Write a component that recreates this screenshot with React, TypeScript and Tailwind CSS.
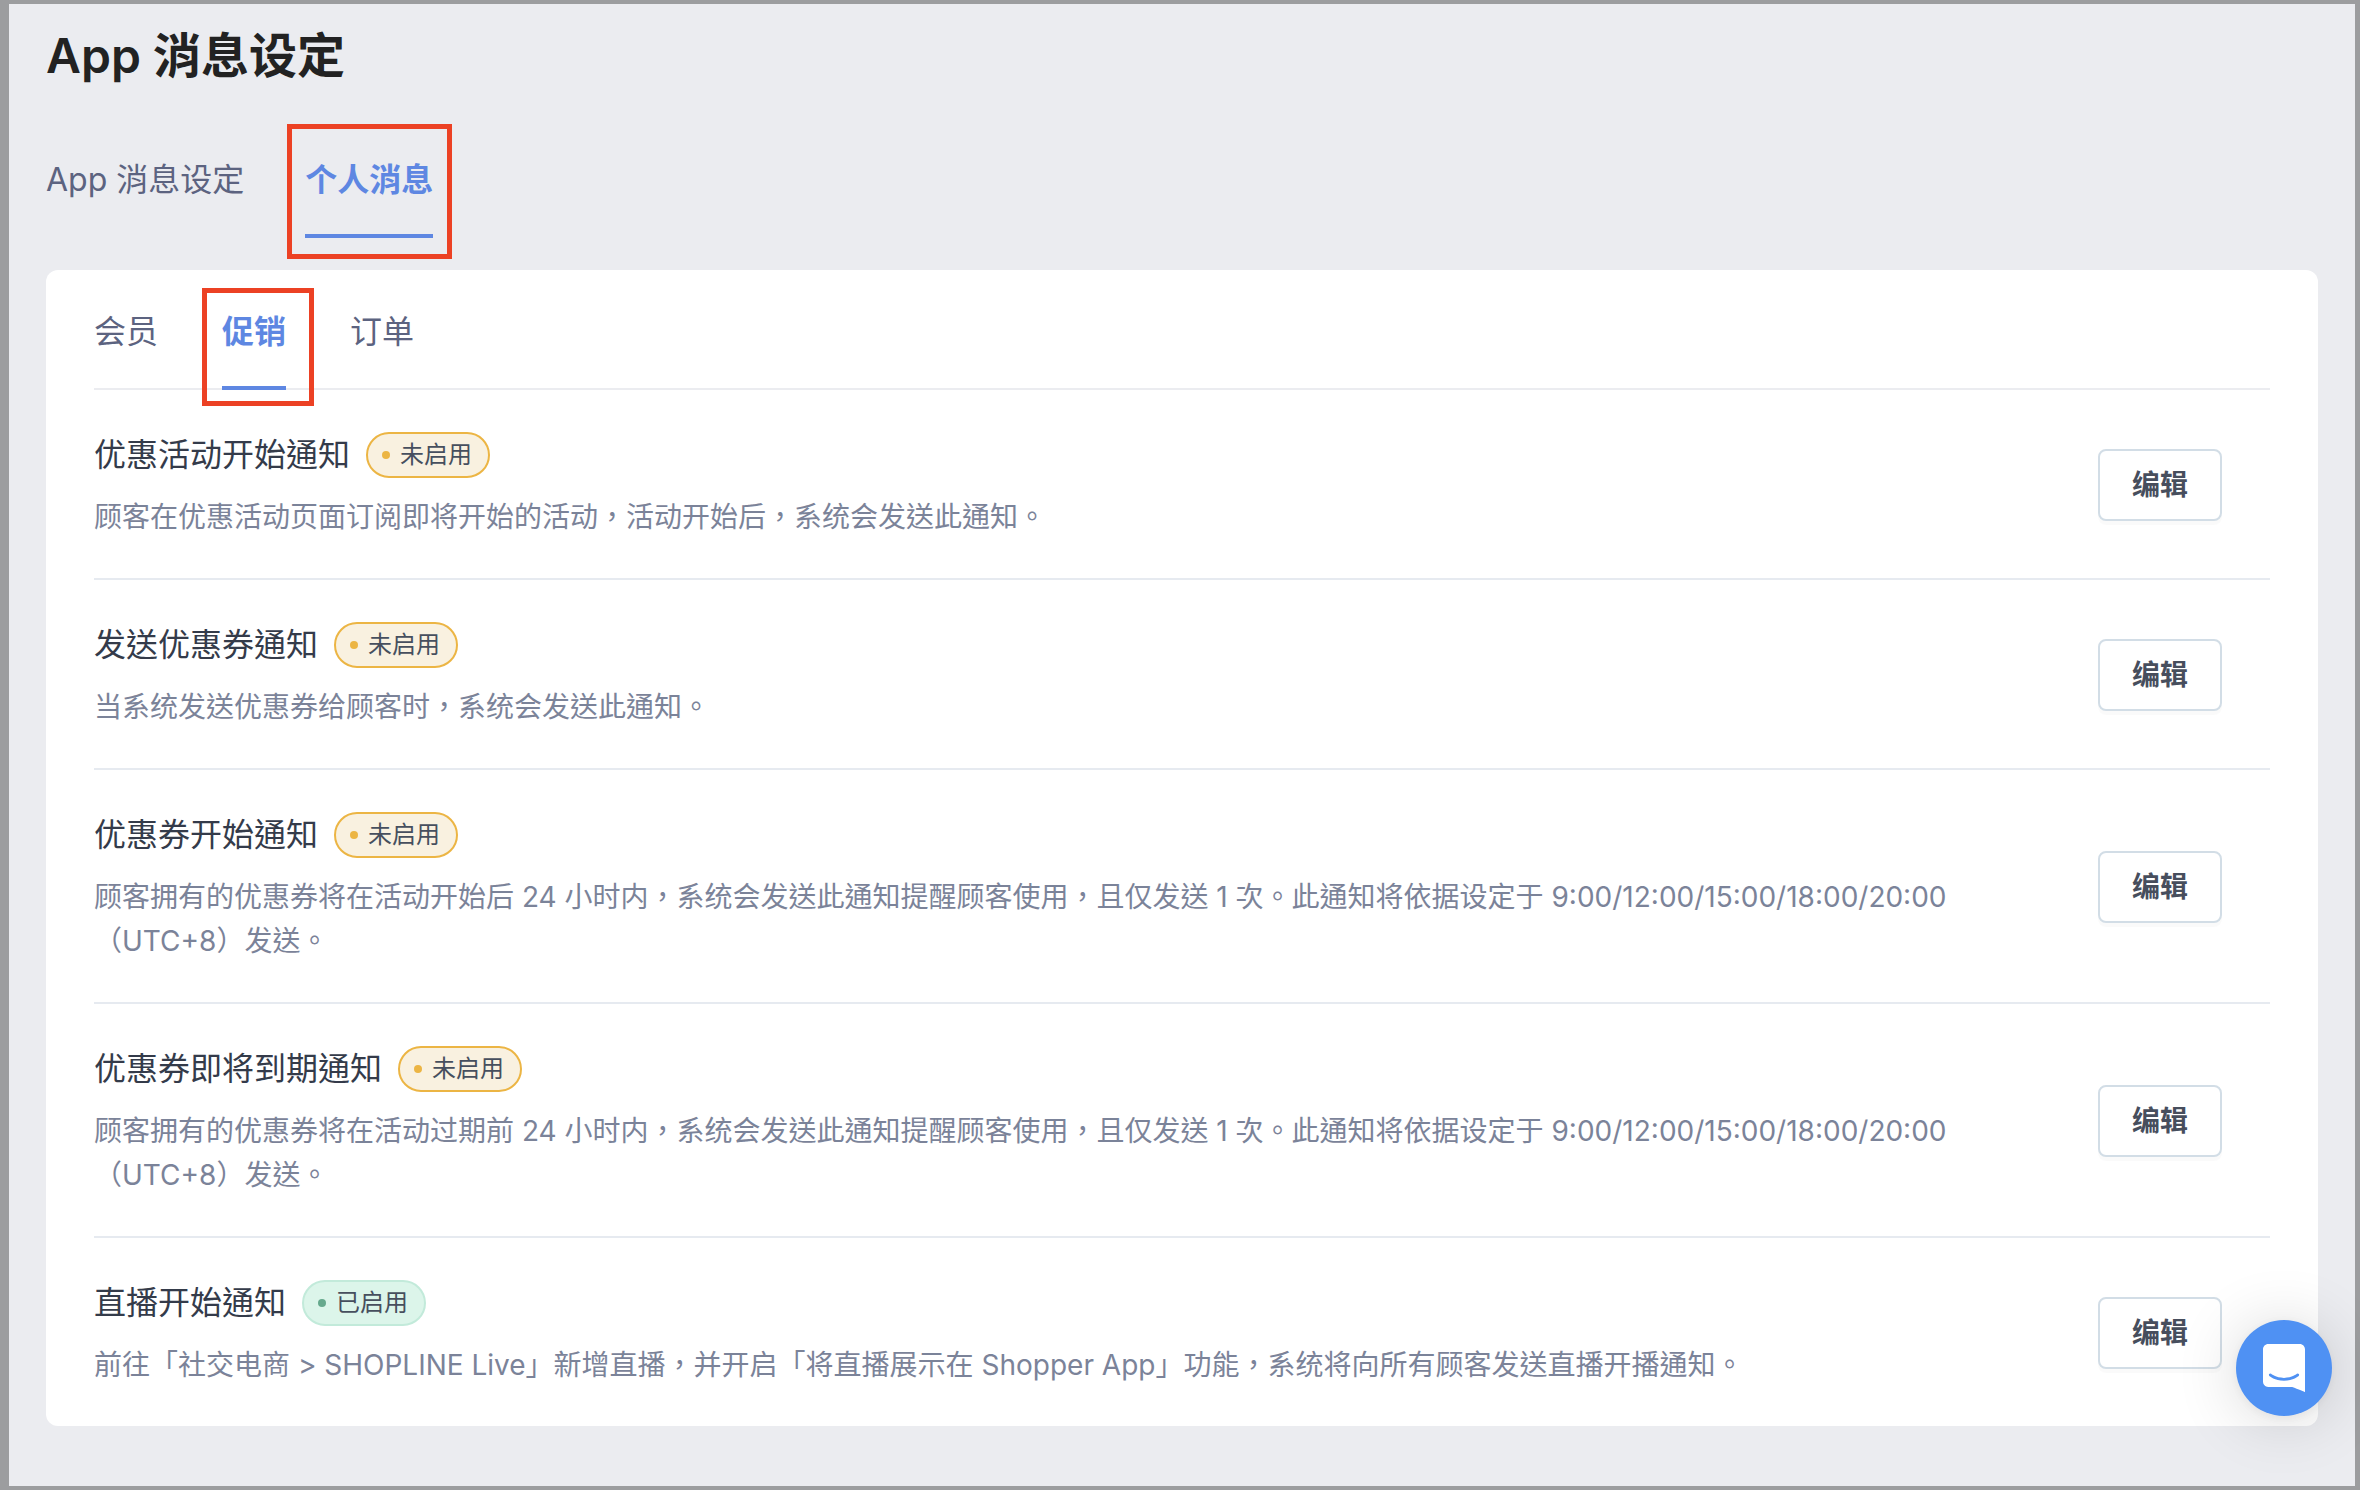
import { useState } from 'react';

const pageTabs = ['App 消息设定', '个人消息'];
const categoryTabs = ['会员', '促销', '订单'];

const notifications = [
  {
    title: '优惠活动开始通知',
    description: '顾客在优惠活动页面订阅即将开始的活动，活动开始后，系统会发送此通知。',
    enabled: false,
  },
  {
    title: '发送优惠券通知',
    description: '当系统发送优惠券给顾客时，系统会发送此通知。',
    enabled: false,
  },
  {
    title: '优惠券开始通知',
    description:
      '顾客拥有的优惠券将在活动开始后 24 小时内，系统会发送此通知提醒顾客使用，且仅发送 1 次。此通知将依据设定于 9:00/12:00/15:00/18:00/20:00（UTC+8）发送。',
    enabled: false,
  },
  {
    title: '优惠券即将到期通知',
    description:
      '顾客拥有的优惠券将在活动过期前 24 小时内，系统会发送此通知提醒顾客使用，且仅发送 1 次。此通知将依据设定于 9:00/12:00/15:00/18:00/20:00（UTC+8）发送。',
    enabled: false,
  },
  {
    title: '直播开始通知',
    description:
      '前往「社交电商 > SHOPLINE Live」新增直播，并开启「将直播展示在 Shopper App」功能，系统将向所有顾客发送直播开播通知。',
    enabled: true,
  },
];

interface TabProps {
  label: string;
  active: boolean;
  highlight: string;
  onClick: () => void;
}

const Tab = ({ label, active, highlight, onClick }: TabProps) => (
  <button
    type="button"
    role="tab"
    aria-selected={active}
    onClick={onClick}
    className={`relative -mb-0.5 border-b-4 pb-[30px] pt-0.5 text-[32px] leading-[48px] cursor-pointer ${
      active ? 'border-[#5e87e2] font-bold text-[#5e87e2]' : 'border-transparent text-[#5c6380]'
    }`}
  >
    {label}
    {active && (
      <span className={`pointer-events-none absolute border-[5px] border-[#ec4124] ${highlight}`} />
    )}
  </button>
);

const StatusBadge = ({ enabled }: { enabled: boolean }) => (
  <span
    className={`flex h-[46px] items-center gap-2.5 rounded-full border-2 pl-3.5 pr-4 text-2xl text-[#474f5e] ${
      enabled ? 'border-[#c2eada] bg-[#dcf5ea]' : 'border-[#ecb544] bg-[#f9f1e0]'
    }`}
  >
    <span className={`size-2 rounded-full ${enabled ? 'bg-[#66a98d]' : 'bg-[#ecb544]'}`} />
    {enabled ? '已启用' : '未启用'}
  </span>
);

const ChatLauncher = () => (
  <button
    type="button"
    aria-label="Chat"
    className="fixed bottom-[74px] right-7 flex size-24 cursor-pointer items-center justify-center rounded-full bg-[#4f91f3] shadow-[0_2px_12px_rgba(0,0,0,0.06),0_4px_64px_rgba(0,0,0,0.16)]"
  >
    <svg viewBox="0 0 28 32" className="h-12 w-[42px]" fill="#fff">
      <path d="M28 32s-4.714-1.855-8.527-3.34H3.437C1.54 28.66 0 27.026 0 25.013V3.644C0 1.633 1.54 0 3.437 0h21.125c1.898 0 3.437 1.632 3.437 3.645v18.404H28V32zm-4.139-11.982a.88.88 0 00-1.292-.105c-.03.026-3.015 2.681-8.57 2.681-5.486 0-8.517-2.636-8.571-2.684a.88.88 0 00-1.29.107 1.01 1.01 0 00-.219.708.992.992 0 00.318.664c.142.128 3.537 3.15 9.762 3.15 6.226 0 9.621-3.022 9.763-3.15a.992.992 0 00.317-.664 1.01 1.01 0 00-.218-.707z" />
    </svg>
  </button>
);

const App = () => {
  const [page, setPage] = useState('个人消息');
  const [category, setCategory] = useState('促销');

  return (
    <div className="min-h-screen border-y-4 border-l-[9px] border-r-[5px] border-[#9c9d9f] bg-[#ebecf0] px-[37px] pb-[60px] pt-6 font-['Inter','Noto_Sans_CJK_TC',sans-serif]">
      <h1 className="text-5xl leading-[56px] font-semibold text-[#222]">App 消息设定</h1>

      <div role="tablist" className="mb-[34px] mt-[70px] flex gap-[61px]">
        {pageTabs.map((label) => (
          <Tab
            key={label}
            label={label}
            active={page === label}
            highlight="-bottom-[25px] -left-[18px] -right-[19px] -top-[30px]"
            onClick={() => setPage(label)}
          />
        ))}
      </div>

      <main className="rounded-xl bg-white px-12 pt-9">
        <div role="tablist" className="flex gap-16 border-b-2 border-[#ebecf0]">
          {categoryTabs.map((label) => (
            <Tab
              key={label}
              label={label}
              active={category === label}
              highlight="-bottom-5 -left-5 -right-7 -top-[18px]"
              onClick={() => setCategory(label)}
            />
          ))}
        </div>

        <ul className="divide-y-2 divide-[#e6eaf0]">
          {notifications.map((item) => (
            <li key={item.title} className="flex items-center gap-16 pb-[39px] pr-12 pt-[41px]">
              <div className="flex-1">
                <div className="mb-4 flex h-12 items-center gap-4">
                  <h2 className="text-[32px] leading-[48px] text-[#343b4a]">{item.title}</h2>
                  <StatusBadge enabled={item.enabled} />
                </div>
                <p className="text-[28px] leading-[44px] text-[#7b8399]">{item.description}</p>
              </div>
              <button
                type="button"
                className="h-[72px] w-[124px] shrink-0 cursor-pointer rounded-lg border-2 border-[#d2dde6] bg-white text-[28px] font-semibold text-[#474e5d] shadow-[0_4px_0_rgba(0,0,0,0.02)]"
              >
                编辑
              </button>
            </li>
          ))}
        </ul>
      </main>

      <ChatLauncher />
    </div>
  );
};

export default App;
